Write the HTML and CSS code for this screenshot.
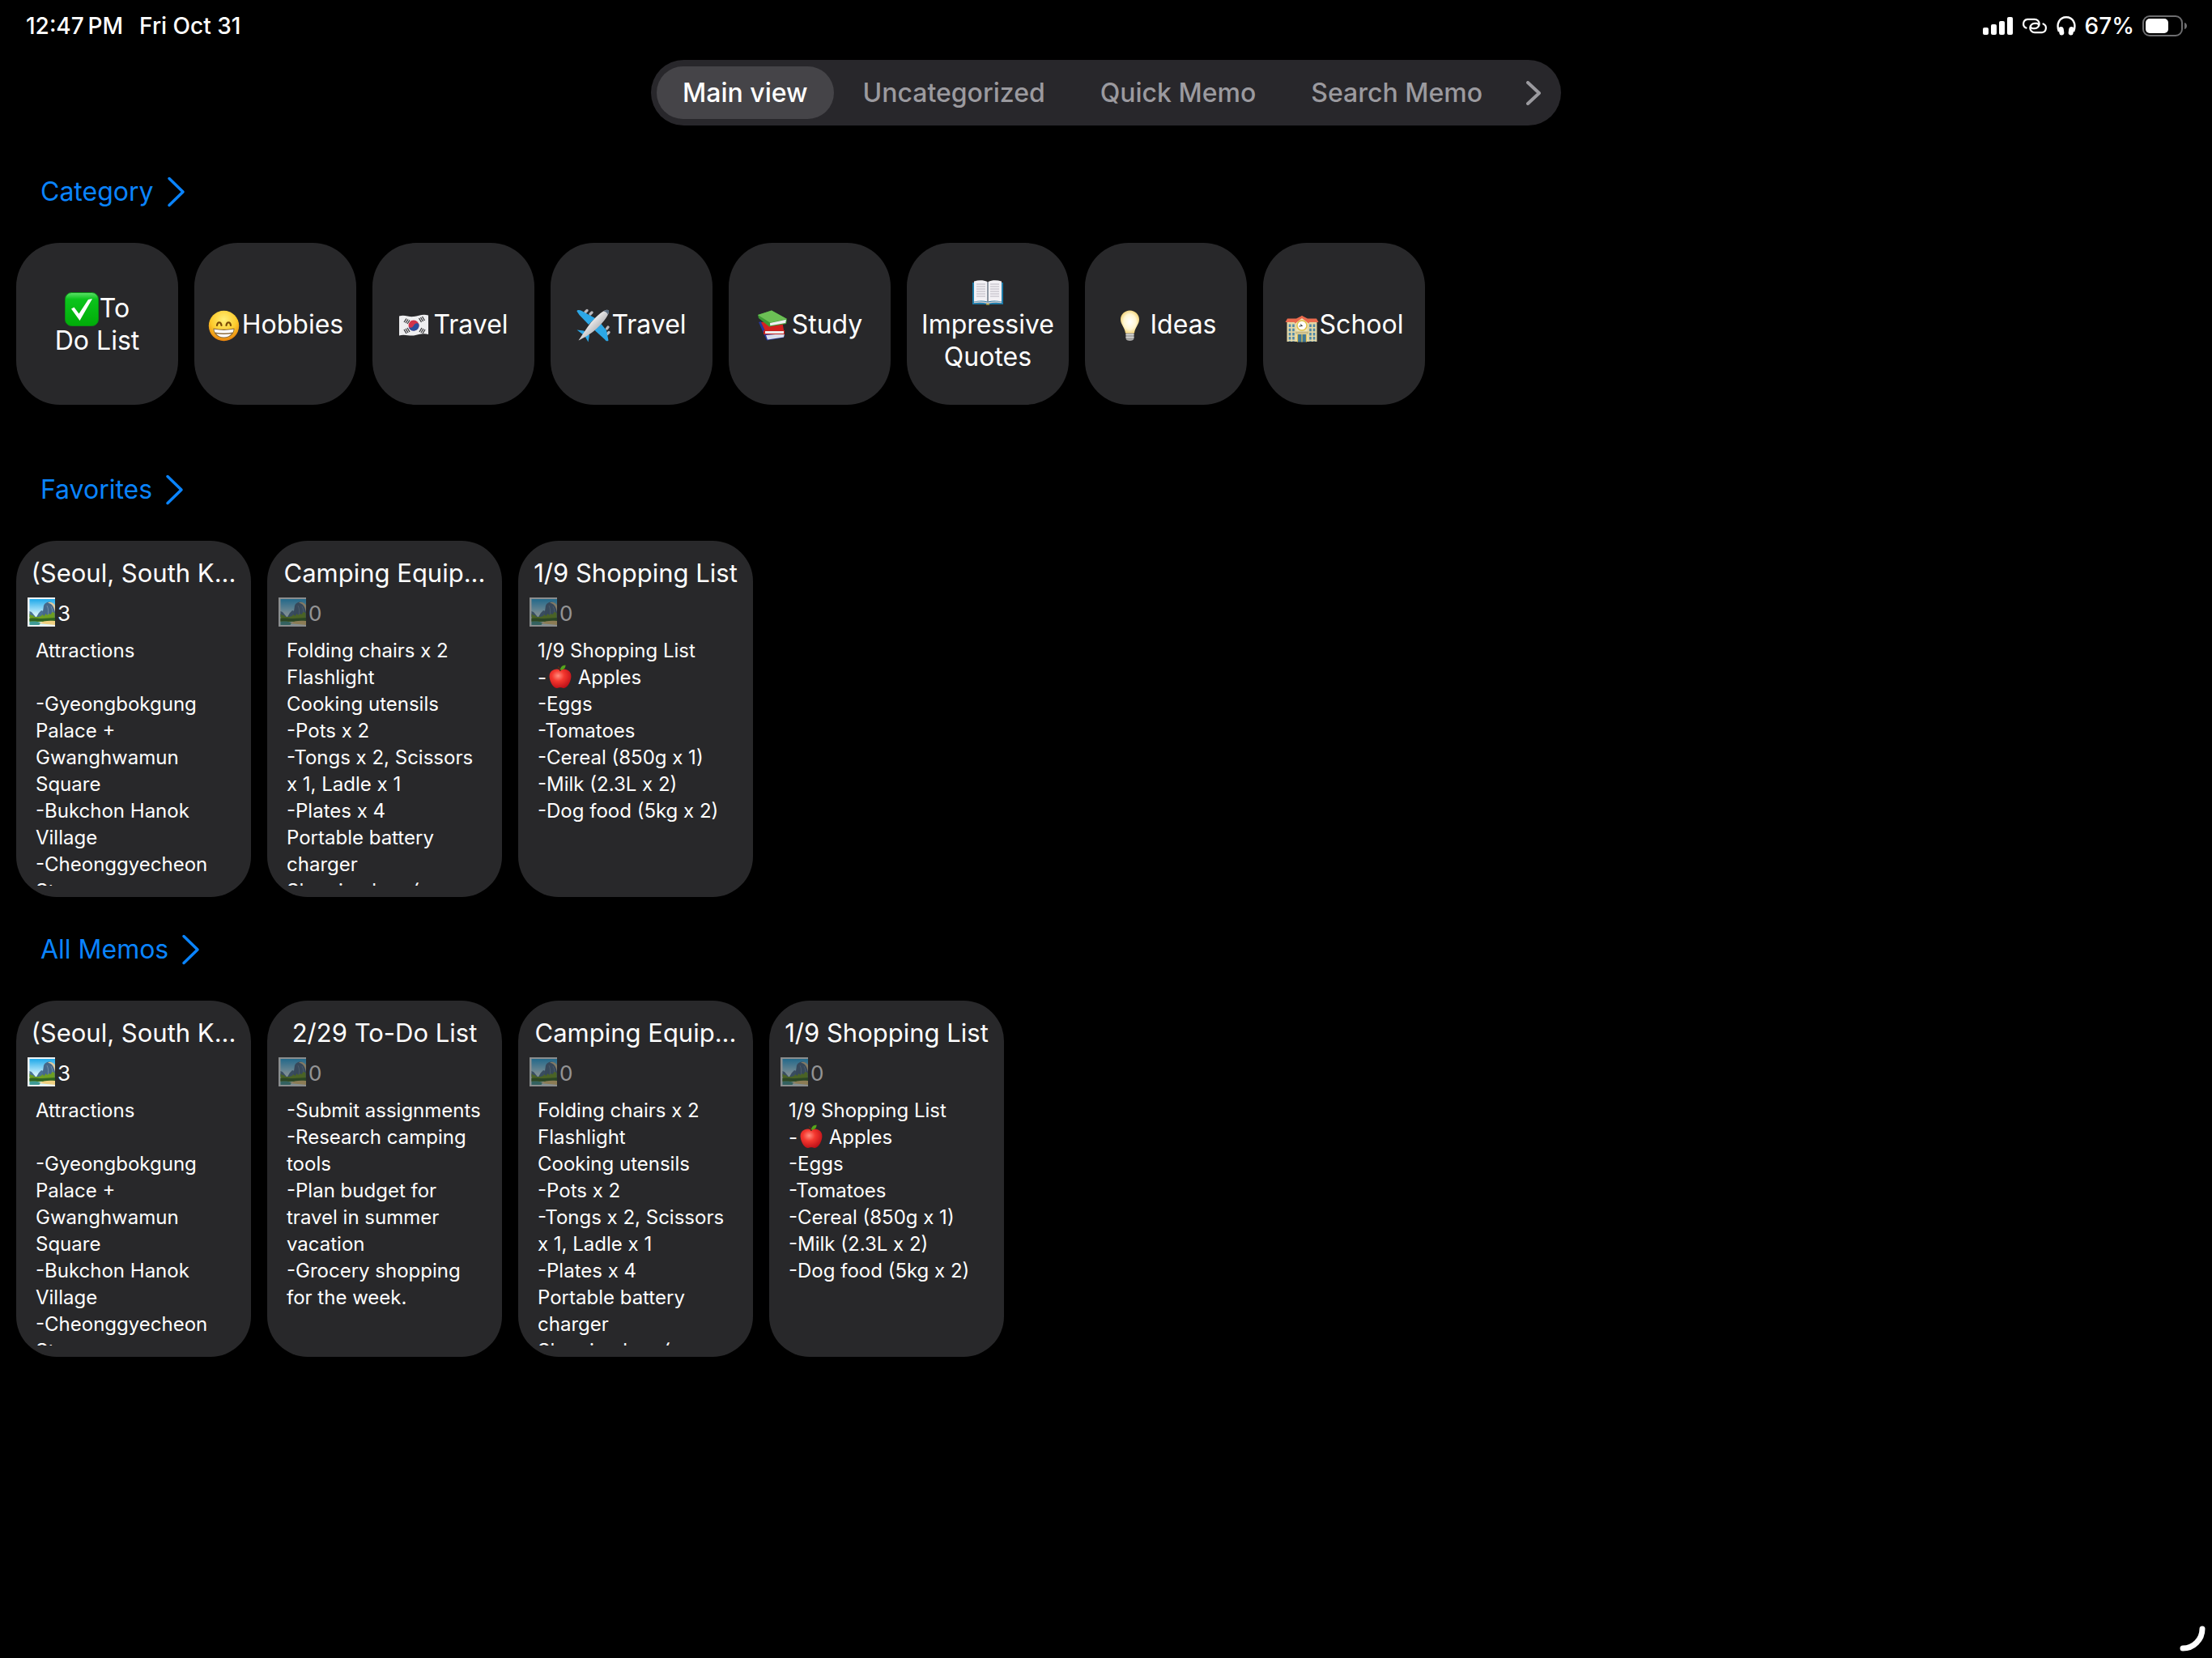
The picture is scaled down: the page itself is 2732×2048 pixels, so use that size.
FILE: index.html
```html
<!DOCTYPE html>
<html lang="en">

<head>
    <meta charset="UTF-8">
    <meta name="viewport" content="width=device-width, initial-scale=1.0">
    <title>Memos</title>
    <link rel="stylesheet" href="styles.css">
</head>

<body>
    <!-- shared icons -->
    <svg class="sprite" aria-hidden="true">
        <defs>
            <linearGradient id="g-check" x1="0" y1="0" x2="0" y2="1">
                <stop offset="0" stop-color="#5ee06a" />
                <stop offset="0.2" stop-color="#0bc41c" />
                <stop offset="1" stop-color="#00ad08" />
            </linearGradient>
            <radialGradient id="g-face" cx="0.5" cy="0.3" r="0.7">
                <stop offset="0" stop-color="#fff07a" />
                <stop offset="0.6" stop-color="#fdcb2c" />
                <stop offset="1" stop-color="#e8820c" />
            </radialGradient>
            <linearGradient id="g-plane" x1="0" y1="0" x2="1" y2="1">
                <stop offset="0.3" stop-color="#ffffff" />
                <stop offset="0.7" stop-color="#a9a9ad" />
            </linearGradient>
            <radialGradient id="g-bulb" cx="0.5" cy="0.5" r="0.55">
                <stop offset="0" stop-color="#ffffff" />
                <stop offset="0.6" stop-color="#fff6d2" />
                <stop offset="1" stop-color="#f2cf6e" />
            </radialGradient>
            <radialGradient id="g-apple" cx="0.4" cy="0.35" r="0.7">
                <stop offset="0" stop-color="#ff8f80" />
                <stop offset="0.4" stop-color="#f5382f" />
                <stop offset="1" stop-color="#b80d16" />
            </radialGradient>
            <linearGradient id="g-sky" x1="0" y1="0" x2="0" y2="1">
                <stop offset="0" stop-color="#1fa9ea" />
                <stop offset="0.6" stop-color="#d4f3fc" />
            </linearGradient>
        </defs>
        <symbol id="chevron" viewBox="0 0 24 40">
            <path d="M3 3.500 20 20 3 36.500" fill="none" stroke="currentColor" stroke-width="3.500" stroke-linecap="round" stroke-linejoin="round" />
        </symbol>
        <symbol id="check" viewBox="0 0 42 42">
            <rect x="0.500" y="0.500" width="41" height="41" rx="8" fill="url(#g-check)" stroke="#0a8f14" />
            <path d="M8 20.500 11.500 18.500 17.500 26.500 29 9 34 8 18.500 35Z" fill="#fff" />
        </symbol>
        <symbol id="grin" viewBox="0 0 42 42">
            <circle cx="20.500" cy="21.500" r="18.700" fill="url(#g-face)" />
            <path d="M12 21c.5-5 5-5 5.500 0M23.500 21c.5-5 5-5 5.500 0" fill="none" stroke="#7a4a06" stroke-width="2.200" stroke-linecap="round" />
            <path d="M7.500 24.500c8 1.800 18 1.800 26 0 .3 6.500-5.500 12-13 12s-13.300-5.500-13-12Z" fill="#8b6a3a" />
            <path d="M8.500 25.800c8 1.500 16 1.500 24 0 0 1.500-.4 2.600-1 3.800-7 1.200-15 1.200-22 0-.6-1.200-1-2.300-1-3.800ZM11 31.300c6 1 13 1 19 0-2.200 2.800-5.500 4.200-9.500 4.200s-7.300-1.400-9.500-4.200Z" fill="#fff" />
        </symbol>
        <symbol id="korea" viewBox="0 0 42 42">
            <path d="M1 9.500c7-2 12 1.500 18 .6 6-.9 11-3.600 18-1.600V32c-7-1.800-12 .6-18 1.400-6 .8-11-1.900-18 0Z" fill="#eeeef0" />
            <circle cx="19" cy="21" r="6.500" fill="#d2344a" />
            <path d="M12.600 22.500c1.500 2.300 4.900 1.500 6.400-1.500s5-3.700 6.400-1.200A6.500 6.500 0 0 1 12.600 22.500Z" fill="#2b4f9c" />
            <g stroke="#3a3a3c" stroke-width="1.300" fill="none">
                <path d="m7 17 3-4.500M9 18l3-4.500M11 19l3-4.500M25.500 12l3 5M27.500 11l3 5M29.500 10l3 5M7 26l3 5M9 25l3 5M11 24l3 5M26 29l3-5M28 30l3-5M30 31l3-5" />
            </g>
        </symbol>
        <symbol id="plane" viewBox="0 0 42 42">
            <g stroke="#b9b9bd" stroke-width="3.200" stroke-linecap="round">
                <path d="m11 4.500 2-2M17 7l2-2M37.500 25l1.500-2M38 31.500l2-2" />
            </g>
            <path d="M.5 3.500C.5 1.500 4 1.800 6 2.800L23 12 15 20 3.500 8ZM39.500 39.500c-1.800 1.800-3.500.3-4.300-1L22.500 27 30 18.500 37 27ZM.5 26.500 9 27.500 13 31.500 9 33ZM14.500 41.500 10 33.500 13 29.500 16 33Z" fill="#2ca7e6" />
            <path d="M2.500 39.500 13 24C19 15 28 6 35 2.500c2.500-1.200 5-.8 5 1.500 0 5-10 17-18 23.500C14.500 33.500 5 38.500 2.500 39.500Z" fill="url(#g-plane)" />
            <path d="M33.500 3.500c2-1.500 4.800-2.200 6-1.200 1.200 1.200.6 3.500-.8 5.500-.4-2-2.400-4.200-5.200-4.300Z" fill="#5b6d80" />
        </symbol>
        <symbol id="books" viewBox="0 0 42 42">
            <path d="m2 17 3-1 9 15 20-1-1 6-21 3.500Z" fill="#25379d" />
            <path d="m11 33 23-2-1 4.500-20 3Z" fill="#d9dcea" />
            <path d="m5 17 26-2 2 12-22 3Z" fill="#d3211f" />
            <path d="M8 27h26v5H8Z" fill="#c5201e" />
            <path d="M10 28h23v3H10Z" fill="#eee" />
            <path d="M1 8 18 2.500 37 13 36 19 15 22.500 2 12Z" fill="#3e9a35" />
            <path d="M1 8 18 2.500 37 13 16 17.500Z" fill="#6cc055" />
            <path d="m16 18 20-4.300-.8 4.300-19 3.300Z" fill="#f1f1f1" />
        </symbol>
        <symbol id="open-book" viewBox="0 0 42 42">
            <path d="M2 8h38v27H24l-3 1-3-1H2Z" fill="#1e7ba8" />
            <path d="M4 6.500C10 4.500 16 4.800 20.500 7v24.500C16 30 10 30 4 31.500ZM38 6.500C32 4.500 26 4.800 21.500 7v24.500C26 30 32 30 38 31.500Z" fill="#f3f1f5" />
            <path d="M4 32.500c6-1 11-.8 17 .8 6-1.600 11-1.800 17-.8" fill="none" stroke="#cfcbd0" stroke-width="1.500" />
            <path d="M7 10h11M7 13h11M7 16h11M7 19h11M7 22h11M7 25h11M24 10h11M24 13h11M24 16h11M24 19h11M24 22h11M24 25h11" stroke="#b9b6bf" stroke-width="1.200" />
            <path d="M21 7v25" stroke="#8d8a92" stroke-width="1.500" />
            <path d="M19 34h4v1.500h-4Z" fill="#c7a12e" />
        </symbol>
        <symbol id="bulb" viewBox="0 0 42 42">
            <path d="M13.500 30h10v7c0 4-10 4-10 0Z" fill="#a5a4a2" />
            <path d="M13.500 32.500h10M13.500 35.500h10" stroke="#dededc" stroke-width="1.200" />
            <path d="M18.500 2.500C25 2.500 30 7.500 30 13.500c0 6-5 9.500-6 17h-11c-1-7.500-6-11-6-17 0-6 5-11 11.500-11Z" fill="url(#g-bulb)" />
        </symbol>
        <symbol id="school" viewBox="0 0 42 42">
            <path d="M2.500 17h37v24h-37Z" fill="#e3d7a6" />
            <path d="M.5 17 3 12.500h11L21 9l7 3.500h11L41.500 17Z" fill="#ea6a4d" />
            <path d="M14 16.500 21 11l7 5.500V41H14Z" fill="#eee3b8" />
            <path d="m12 17.500 9-7 9 7" fill="none" stroke="#ea6a4d" stroke-width="2.500" />
            <g stroke="#4d87a8" stroke-width="2.600" stroke-dasharray="3.500 1.700">
                <path d="M6 19.500V41M10.500 19.500V41M31.500 19.500V41M36 19.500V41" />
            </g>
            <circle cx="21" cy="21" r="6" fill="#fff" stroke="#e0c045" stroke-width="1.500" />
            <path d="m19 19.500 2.500 2-4 .500" fill="none" stroke="#333" />
            <path d="M13 28.500h16v3H13Z" fill="#c9bb86" />
            <path d="M15.500 32h11v9.500h-11Z" fill="#3f7796" />
            <path d="M15.500 41.500V32M21 41.500V32M26.500 41.500V32" stroke="#e2c04a" stroke-width="1.200" />
        </symbol>
        <symbol id="apple" viewBox="0 0 30 30">
            <path d="M15 7c2-1.600 5-2 8-.8 4 1.700 6 5 5.300 10C27.300 23 23 29 19 29c-1.500 0-2.500-.7-4-.7s-2.500.7-4 .7C7 29 2.700 23 1.700 16.200 1 11.200 3 7.900 7 6.200 10 5 13 5.400 15 7Z" fill="url(#g-apple)" />
            <path d="M15 8c0-2-1-4-3-5.500" fill="none" stroke="#5d2a17" stroke-width="1.500" />
            <path d="M15 6.500C15 3 17.500.8 21.500.5c.3 3.500-2.500 6.200-6.500 6Z" fill="#55a51c" />
        </symbol>
        <symbol id="photo" viewBox="0 0 34 36">
            <path d="M0 0h34v36H0Z" fill="#eef3f4" />
            <path d="M2.500 2H34v32H2.500Z" fill="url(#g-sky)" />
            <path d="M2.500 17 5 18l5 6H2.500ZM11 24l3-5 3-3 3 1v8Z" fill="#4a7395" />
            <path d="M18 24 20 10c1-3 4-4.500 7-4.500 3 0 4 2 7 4V26H18Z" fill="#46688a" />
            <path d="M25 6.500c3-1.500 6-.5 9 3V18c-1-4-2-7-4-9-1-1-3-2-5-2.500Z" fill="#ddcda3" />
            <path d="M24 10c2 4 2 8 1 13M29 11c2 4 2 7 2 11" fill="none" stroke="#6f8ea8" />
            <path d="M2.500 20l2 2 2 0 2 2h5l3-1 2-2 2 2 2-3 2 2 2-2 2 1 2-3 3 1V30H2.500Z" fill="#6d9e22" />
            <path d="M2.500 26c6-1 9 0 15 0s12-1 16.500-1v4.500H2.500Z" fill="#2f6320" />
            <path d="M2.500 30c6-1 10 0 14 1l-2 3h-12Z" fill="#3f9a94" />
            <path d="M14 32c5-3 12-4 20-3v5c-7-1-14-1-20-2Z" fill="#efcf80" />
        </symbol>
    </svg>

    <header class="status-bar">
        <div class="status-left">
            <span>12:47&#8201;PM</span>
            <span>Fri Oct 31</span>
        </div>
        <div class="status-right">
            <svg width="38" height="24" viewBox="0 0 38 24" fill="#fff" aria-label="Signal">
                <rect x="0" y="14" width="7" height="9" rx="2" />
                <rect x="10" y="10" width="7" height="13" rx="2" />
                <rect x="20" y="6" width="7" height="17" rx="2" />
                <rect x="30" y="1" width="7" height="22" rx="2" />
            </svg>
            <svg width="32" height="20" viewBox="0 0 32 20" fill="none" stroke="#fff" stroke-width="2.200" stroke-linecap="round" aria-label="Hotspot">
                <path d="M5.500 12.500A5.600 5.600 0 0 1 7 1.800H16a5.700 5.700 0 0 1 0 11.400h-2.500a2.600 2.600 0 0 1-2.500-2.700" />
                <path d="M26.500 7.500A5.600 5.600 0 0 1 25 18.200H16A5.700 5.700 0 0 1 16 6.800h2.500A2.600 2.600 0 0 1 21 9.500" />
            </svg>
            <svg width="26" height="26" viewBox="0 0 26 26" aria-label="Headphones">
                <path d="M4 20C0 10 5 2.200 13 2.200S26 10 22 20" fill="none" stroke="#fff" stroke-width="2.400" />
                <rect x="4" y="14" width="6" height="10.500" rx="3" fill="#fff" transform="rotate(-8 7 19)" />
                <rect x="16" y="14" width="6" height="10.500" rx="3" fill="#fff" transform="rotate(8 19 19)" />
            </svg>
            <span>67%</span>
            <svg width="56" height="26" viewBox="0 0 56 26" aria-label="Battery">
                <rect x="1" y="1" width="48" height="24" rx="8" fill="none" stroke="#6e6e70" stroke-width="2" />
                <rect x="4" y="4" width="28" height="18" rx="5" fill="#fff" />
                <path d="M52 9c4 1 4 7 0 8Z" fill="#6e6e70" />
            </svg>
        </div>
    </header>

    <nav class="tab-bar">
        <button type="button" class="tab active">Main view</button>
        <button type="button" class="tab">Uncategorized</button>
        <button type="button" class="tab">Quick Memo</button>
        <button type="button" class="tab">Search Memo</button>
        <button type="button" class="tab-next" aria-label="More tabs">
            <svg width="18" height="30" viewBox="0 0 18 30">
                <path d="M2 2 16 15 2 28" fill="none" stroke="currentColor" stroke-width="4" stroke-linecap="round" stroke-linejoin="round" />
            </svg>
        </button>
    </nav>

    <main>
        <section>
            <h2><a href="#category">Category <svg class="chevron"><use href="#chevron" /></svg></a></h2>
            <div class="categories">
                <a class="category" href="#todo"><span><svg class="emoji"><use href="#check" /></svg>To<br>Do List</span></a>
                <a class="category" href="#hobbies"><span><svg class="emoji"><use href="#grin" /></svg>Hobbies</span></a>
                <a class="category" href="#korea-travel"><span><svg class="emoji"><use href="#korea" /></svg>Travel</span></a>
                <a class="category" href="#travel"><span><svg class="emoji"><use href="#plane" /></svg>Travel</span></a>
                <a class="category" href="#study"><span><svg class="emoji"><use href="#books" /></svg>Study</span></a>
                <a class="category" href="#quotes"><span><svg class="emoji"><use href="#open-book" /></svg><br>Impressive<br>Quotes</span></a>
                <a class="category" href="#ideas"><span><svg class="emoji"><use href="#bulb" /></svg>Ideas</span></a>
                <a class="category" href="#school-memos"><span><svg class="emoji"><use href="#school" /></svg>School</span></a>
            </div>
        </section>

        <section>
            <h2><a href="#favorites">Favorites <svg class="chevron"><use href="#chevron" /></svg></a></h2>
            <div class="memos">
                <article class="memo">
                    <h3>(Seoul, South K...</h3>
                    <div class="photos"><svg><use href="#photo" /></svg>3</div>
                    <p>Attractions

-Gyeongbokgung Palace + Gwanghwamun Square
-Bukchon Hanok Village
-Cheonggyecheon Stream</p>
                </article>
                <article class="memo">
                    <h3>Camping Equip...</h3>
                    <div class="photos none"><svg><use href="#photo" /></svg>0</div>
                    <p>Folding chairs x 2
Flashlight
Cooking utensils
-Pots x 2
-Tongs x 2, Scissors x 1, Ladle x 1
-Plates x 4
Portable battery charger
Sleeping bag (</p>
                </article>
                <article class="memo">
                    <h3>1/9 Shopping List</h3>
                    <div class="photos none"><svg><use href="#photo" /></svg>0</div>
                    <p>1/9 Shopping List
-<svg class="apple"><use href="#apple" /></svg> Apples
-Eggs
-Tomatoes
-Cereal (850g x 1)
-Milk (2.3L x 2)
-Dog food (5kg x 2)</p>
                </article>
            </div>
        </section>

        <section>
            <h2><a href="#all">All Memos <svg class="chevron"><use href="#chevron" /></svg></a></h2>
            <div class="memos">
                <article class="memo">
                    <h3>(Seoul, South K...</h3>
                    <div class="photos"><svg><use href="#photo" /></svg>3</div>
                    <p>Attractions

-Gyeongbokgung Palace + Gwanghwamun Square
-Bukchon Hanok Village
-Cheonggyecheon Stream</p>
                </article>
                <article class="memo">
                    <h3>2/29 To-Do List</h3>
                    <div class="photos none"><svg><use href="#photo" /></svg>0</div>
                    <p>-Submit assignments
-Research camping tools
-Plan budget for travel in summer vacation
-Grocery shopping for the week.</p>
                </article>
                <article class="memo">
                    <h3>Camping Equip...</h3>
                    <div class="photos none"><svg><use href="#photo" /></svg>0</div>
                    <p>Folding chairs x 2
Flashlight
Cooking utensils
-Pots x 2
-Tongs x 2, Scissors x 1, Ladle x 1
-Plates x 4
Portable battery charger
Sleeping bag (</p>
                </article>
                <article class="memo">
                    <h3>1/9 Shopping List</h3>
                    <div class="photos none"><svg><use href="#photo" /></svg>0</div>
                    <p>1/9 Shopping List
-<svg class="apple"><use href="#apple" /></svg> Apples
-Eggs
-Tomatoes
-Cereal (850g x 1)
-Milk (2.3L x 2)
-Dog food (5kg x 2)</p>
                </article>
            </div>
        </section>
    </main>

    <svg class="corner-hint" viewBox="0 0 40 40" aria-hidden="true">
        <path d="M8 32A24 24 0 0 0 32 8" fill="none" stroke="#fff" stroke-width="7" stroke-linecap="round" />
    </svg>
</body>

</html>
```
FILE: styles.css
```css
* {
    box-sizing: border-box;
}

body {
    margin: 0;
    min-height: 100vh;
    background: #000;
    color: #fff;
    font-family: Inter, "Liberation Sans", sans-serif;
    font-size: 32px;
    line-height: 40px;
}

a {
    color: inherit;
    text-decoration: none;
}

button {
    border: 0;
    background: none;
    color: inherit;
    font: inherit;
}

.sprite {
    position: absolute;
    width: 0;
    height: 0;
}

/* status bar */
.status-bar {
    display: flex;
    justify-content: space-between;
    align-items: center;
    height: 64px;
    padding: 0 30px 0 32px;
    font-size: 28px;
    font-weight: 500;
}

.status-left {
    display: flex;
    gap: 20px;
}

.status-right {
    display: flex;
    align-items: center;
    gap: 10px;
}

/* tabs */
.tab-bar {
    display: flex;
    align-items: center;
    gap: 4px;
    width: fit-content;
    margin: 10px auto 62px;
    padding: 8px 7px;
    border-radius: 41px;
    background: #28272b;
    color: #9b9a9f;
    font-weight: 500;
}

.tab {
    height: 65px;
    padding: 0 32px;
    border-radius: 33px;
}

.tab.active {
    background: #454448;
    color: #fff;
}

.tab-next {
    display: flex;
    padding: 0 18px;
}

/* sections */
section {
    margin-bottom: 45px;
}

h2 {
    margin: 0 0 43px;
    padding-left: 50px;
    color: #0a84ff;
    font-size: 32px;
    font-weight: 400;
}

h2 a {
    display: inline-flex;
    align-items: center;
    gap: 16px;
}

.chevron {
    width: 24px;
    height: 40px;
}

.categories,
.memos {
    display: flex;
    flex-wrap: wrap;
    gap: 20px;
    padding: 0 20px;
}

.categories {
    padding-bottom: 40px;
}

.category {
    display: flex;
    align-items: center;
    justify-content: center;
    width: 200px;
    height: 200px;
    padding-top: 2px;
    border-radius: 54px;
    background: #28282a;
    text-align: center;
}

.emoji {
    width: 42px;
    height: 42px;
    margin: -2px 1px -2px 0;
    vertical-align: -9px;
}

/* memo cards */
.memo {
    display: flex;
    flex-direction: column;
    width: 290px;
    height: 440px;
    padding: 20px 14px 14px;
    border-radius: 50px;
    background: #28282a;
}

.memo h3 {
    margin: 0;
    font-size: 31px;
    font-weight: 400;
    text-align: center;
    white-space: nowrap;
}

.photos {
    display: flex;
    align-items: flex-end;
    gap: 3px;
    height: 36px;
    margin: 10px 0 13px;
    font-size: 26px;
    line-height: 32px;
}

.photos svg {
    width: 34px;
    height: 36px;
}

.photos.none {
    opacity: 0.5;
}

.memo p {
    flex: 1;
    min-height: 0;
    margin: 0;
    padding: 0 8px 0 10px;
    overflow: hidden;
    font-size: 24px;
    line-height: 33px;
    white-space: pre-line;
}

.apple {
    width: 30px;
    height: 30px;
    margin-left: 2px;
    vertical-align: -6px;
}

.corner-hint {
    position: fixed;
    right: 4px;
    bottom: 4px;
    width: 40px;
    height: 40px;
}
```
